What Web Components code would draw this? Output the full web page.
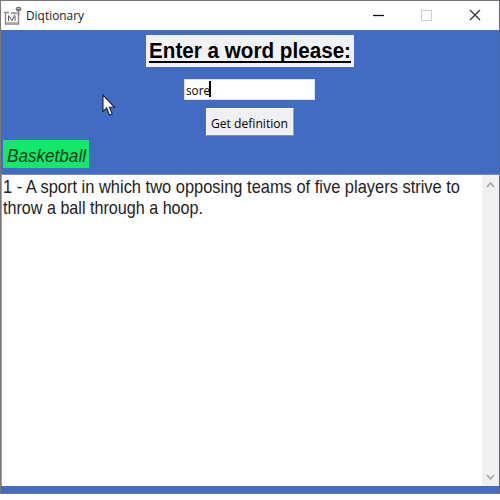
<!DOCTYPE html>
<html lang="en"><head><meta charset="utf-8"><title>Diqtionary</title>
<style>body{margin:0;background:#fdfcfe;width:500px;height:500px;overflow:hidden}</style></head>
<body>
<app-window>
  <title-bar slot="title"><fit-text w="58">Diqtionary</fit-text></title-bar>
  <search-form slot="form"></search-form>
  <definition-view slot="result"></definition-view>
</app-window>
<mouse-pointer></mouse-pointer>
<script>
const define = (name, html, ready) => customElements.define(name, class extends HTMLElement {
  constructor(){ super(); this.attachShadow({mode:'open'}).innerHTML = html; }
  connectedCallback(){ if (ready) ready(this); }
});

define('app-window', `<style>
:host{display:flex;flex-direction:column;box-sizing:border-box;width:500px;height:494px;border:1px solid #77777b;border-right-color:#66666c;border-bottom-color:#75788a;background:#426bc2}
</style><slot name="title"></slot><slot name="form"></slot><slot name="result"></slot>`);

define('title-bar', `<style>
:host{display:flex;height:29px;background:#fff;align-items:center;color:#1c1c1c;font:12.500px/16px "Open Sans",sans-serif;box-sizing:border-box}
.icon{margin:0 4px 0 2px;flex:none}
.buttons{margin-left:auto;flex:none}
::slotted(*){flex:none}
</style>
<svg class="icon" width="19" height="22" viewBox="0 0 19 22" fill="none">
<path d="M2.500 7.500V19H15.500V8.500M1 7.500H6M8 8H14" stroke="#8a8a8a" stroke-width="1.400"/>
<path d="M3 17.500H15" stroke="#bbb"/>
<path d="M5.500 16V11M5.500 10.500L9 15.500M9 15.500L12 9.500M12 11V16" stroke="#5c5c5c"/>
<path d="M15.500 6V10" stroke="#777" stroke-width="1.600"/><ellipse cx="15.500" cy="4" rx="2.800" ry="2.200" fill="#777"/><path d="M14 3.500H17" stroke="#bbb"/>
</svg>
<slot></slot>
<svg class="buttons" width="148" height="29" fill="none">
<path d="M22 14.500H33" stroke="#111" stroke-width="1.300"/>
<rect x="70.500" y="9.500" width="10" height="10" stroke="#d3cacd"/>
<path d="M119 9L129 19M129 9L119 19" stroke="#333" stroke-width="1.300"/>
</svg>`);

define('search-form', `<style>
:host{display:flex;flex-direction:column;align-items:center;height:144px;background:#426bc2;box-sizing:border-box;padding-top:5px;color:#000}
.head{box-sizing:border-box;width:208px;height:32px;background:#f1f2f5;padding:3px 3px 0 3px;font:bold 22px/26px "Liberation Sans",sans-serif}
.head div{border-bottom:2px solid #000;height:23px;width:202px}
.entry{box-sizing:border-box;width:131px;height:21px;margin:12px 1px 0 0;background:#fff;border:1px solid #d5e1f3;display:flex;padding:1px 0 0 1px;font:13px/18px "Open Sans",sans-serif}
.caret{width:2px;height:16px;background:#000;margin-left:-1px;flex:none}
.btn{box-sizing:border-box;width:88px;height:28px;margin-top:8px;background:#f0eff1;border:1px solid #fafafa;border-right-color:#9c9da5;border-bottom-color:#8d909b;padding:5px 0 0 4px;font:13px/18px "Open Sans",sans-serif}
.word{align-self:flex-start;box-sizing:border-box;width:86px;height:28px;margin:4px 0 0 2px;background:#14e86b;color:#073c1b;padding:5px 0 0 4px;font:italic 18.500px/21px "Liberation Sans",sans-serif}
</style>
<div class="head"><div><fit-text w="202">Enter a word please:</fit-text></div></div>
<div class="entry"><fit-text w="24">sore</fit-text><span class="caret"></span></div>
<div class="btn"><fit-text w="77">Get definition</fit-text></div>
<div class="word"><fit-text w="79">Basketball</fit-text></div>`);

define('definition-view', `<style>
:host{display:flex;height:312px;background:#fff;box-sizing:border-box;border-top:1px solid #8a8b94;border-left:1px solid #a2a2a6}
.text{flex:1;padding:2px 0 0 1px;font:18.500px/20.500px "Liberation Sans",sans-serif;color:#222}
.bar{width:17px;background:#f0f0f1;display:flex;flex-direction:column;justify-content:space-between;align-items:center;padding:6px 0 5px}
svg{display:block;fill:none;stroke:#a8a8aa;stroke-width:1.800}
</style>
<div class="text"><fit-text w="457">1 - A sport in which two opposing teams of five players strive to</fit-text><fit-text w="200">throw a ball through a hoop.</fit-text></div>
<div class="bar"><svg width="9" height="8"><path d="M1 6L4.500 2L8 6"/></svg><svg width="9" height="8"><path d="M1 2L4.500 6L8 2"/></svg></div>`);

define('mouse-pointer', `<style>:host{position:absolute;left:102px;top:94px}svg{display:block}</style>
<svg width="14" height="24" viewBox="0 0 14 24"><path d="M1 1V17.500L4.700 14L7.500 21L10.200 20L7.500 13.300H12.500Z" fill="#fff" stroke="#17243f" stroke-width="1.100"/></svg>`);

// One line of text scaled horizontally to the width given in "w".
// Defined last, so that the surrounding fonts are in place when it measures.
define('fit-text', `<style>
:host{display:block;white-space:nowrap}
span{display:inline-block;vertical-align:top;transform-origin:0 0}
</style><span><slot></slot></span>`, el => {
  const w = +el.getAttribute('w'), s = el.shadowRoot.querySelector('span');
  el.style.width = w + 'px';
  s.style.transform = `scaleX(${w / s.getBoundingClientRect().width})`;
});
</script>
</body></html>
